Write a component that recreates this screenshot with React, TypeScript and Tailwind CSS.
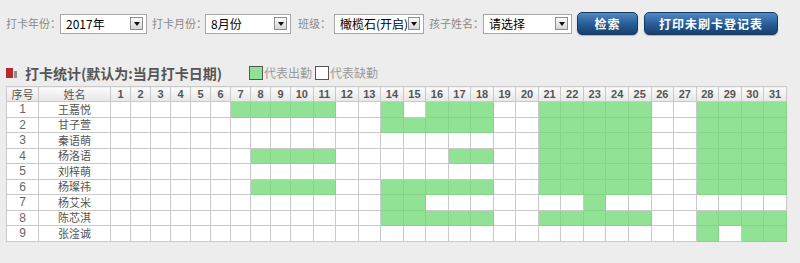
import React from 'react';

// 生成连续日期
function range(a: number, b: number) {
  const out: number[] = [];
  for (let i = a; i <= b; i++) out.push(i);
  return out;
}

const days = range(1, 31);

const students = [
  { name: '王嘉悦', on: [...range(7, 11), 14, 16, 17, 18, ...range(21, 25), ...range(28, 31)] },
  { name: '甘子萱', on: [...range(14, 18), ...range(21, 25), ...range(28, 31)] },
  { name: '秦语萌', on: [...range(21, 25), ...range(28, 31)] },
  { name: '杨洛语', on: [...range(8, 11), 17, 18, ...range(21, 25), ...range(28, 31)] },
  { name: '刘梓萌', on: [...range(21, 25), ...range(28, 31)] },
  { name: '杨璨祎', on: [...range(8, 11), ...range(14, 18), ...range(21, 25), ...range(28, 31)] },
  { name: '杨艾米', on: [14, 15, 23] },
  { name: '陈芯淇', on: [...range(14, 18), ...range(21, 25), ...range(28, 31)] },
  { name: '张淦诚', on: [28, 30, 31] },
];

const cjk = "font-['Noto_Sans_CJK_SC','Liberation_Sans',sans-serif]";

function FakeSelect({ value, className }: { value: string; className: string }) {
  return (
    <div className={`flex items-center justify-between h-[20px] bg-white border border-[#a7a7a7] pl-[5px] pr-[3px] ${className}`}>
      <span className="text-[12px] leading-none text-black whitespace-nowrap">{value}</span>
      {/* 下拉箭头 */}
      <span className="flex items-center justify-center w-[13px] h-[13px] border border-[#8d8d8d] bg-linear-to-b from-[#fdfdfd] to-[#d6d6d6]">
        <svg width="6" height="4" viewBox="0 0 6 4">
          <path d="M0 0H6L3 4Z" fill="#111" />
        </svg>
      </span>
    </div>
  );
}

function BlueButton({ children, className }: { children: React.ReactNode; className: string }) {
  return (
    <button className={`h-[23px] rounded-[5px] border border-[#173a63] bg-linear-to-b from-[#5289c4] via-[#2a5f99] to-[#183f6d] text-white text-[12px] font-bold leading-none tracking-[1px] shadow-[0_1px_1px_rgba(0,0,0,0.25)] ${className}`}>
      {children}
    </button>
  );
}

export default function App() {
  return (
    <div className={`w-[800px] h-[263px] bg-[#ededed] overflow-hidden ${cjk}`}>
      {/* 查询条件 */}
      <div className="flex items-center h-[23px] mt-[12px] pl-[6px] text-[11px] text-[#8a8a8a]">
        <span className="w-[53px] whitespace-nowrap">打卡年份：</span>
        <FakeSelect value="2017年" className="w-[87px] ml-[1px]" />
        <span className="w-[53px] ml-[5px] whitespace-nowrap">打卡月份：</span>
        <FakeSelect value="8月份" className="w-[86px]" />
        <span className="w-[33px] ml-[7px] whitespace-nowrap">班级：</span>
        <FakeSelect value="橄榄石(开启)" className="w-[90px] ml-[3px]" />
        <span className="w-[53px] ml-[5px] whitespace-nowrap">孩子姓名：</span>
        <FakeSelect value="请选择" className="w-[89px] ml-[1px]" />
        <BlueButton className="w-[61px] ml-[5px]">检索</BlueButton>
        <BlueButton className="w-[134px] ml-[6px]">打印未刷卡登记表</BlueButton>
      </div>

      {/* 标题和图例 */}
      <div className="flex items-center h-[20px] mt-[28px] pl-[6px]">
        <span className="flex items-end h-[10px]">
          <span className="w-[7px] h-[10px] bg-[#b52a2a]" />
          <span className="w-[3px] h-[7px] ml-[1px] bg-[#8f8f8f]" />
        </span>
        <span className="w-[224px] ml-[8px] text-[14px] font-bold text-[#555] whitespace-nowrap leading-none">
          打卡统计(默认为:当月打卡日期)
        </span>
        <span className="flex items-center text-[12px] text-[#9a9a9a] leading-none">
          <span className="w-[14px] h-[14px] border border-[#555] bg-[#92e295]" />
          <span className="ml-[1px]">代表出勤</span>
          <span className="w-[14px] h-[14px] ml-[3px] border border-[#555] bg-white" />
          <span className="ml-[1px]">代表缺勤</span>
        </span>
      </div>

      {/* 打卡表 */}
      <table className="mt-[3px] ml-[6px] w-[781px] table-fixed border-collapse">
        <colgroup>
          <col className="w-[32px]" />
          <col className="w-[72px]" />
          {range(1, 9).map((d) => (
            <col key={d} className="w-[20px]" />
          ))}
          {range(10, 31).map((d) => (
            <col key={d} />
          ))}
        </colgroup>
        <thead>
          <tr>
            <th className="h-[15px] p-0 border border-[#c9c9c9] bg-linear-to-b from-[#fbfbfb] to-[#e7e7e7] text-[11px] font-normal text-[#555] leading-none">序号</th>
            <th className="h-[15px] p-0 border border-[#c9c9c9] bg-linear-to-b from-[#fbfbfb] to-[#e7e7e7] text-[11px] font-normal text-[#555] leading-none">姓名</th>
            {days.map((d) => (
              <th
                key={d}
                className="h-[15px] p-0 border border-[#c9c9c9] bg-linear-to-b from-[#fbfbfb] to-[#e7e7e7] font-['Liberation_Sans',sans-serif] text-[11px] font-bold text-[#555] leading-none"
              >
                {d}
              </th>
            ))}
          </tr>
        </thead>
        <tbody>
          {students.map((s, i) => (
            <tr key={s.name}>
              <td className="h-[15.5px] p-0 border border-[#c9c9c9] bg-white text-center font-['Liberation_Sans',sans-serif] text-[12px] text-[#666] leading-none">
                {i + 1}
              </td>
              <td className="h-[15.5px] p-0 border border-[#c9c9c9] bg-white text-center text-[11px] text-[#555] leading-none">
                {s.name}
              </td>
              {days.map((d) =>
                s.on.includes(d) ? (
                  <td key={d} className="h-[15.5px] p-0 border border-[#86d48a] bg-[#92e295]" />
                ) : (
                  <td key={d} className="h-[15.5px] p-0 border border-[#c9c9c9] bg-white" />
                )
              )}
            </tr>
          ))}
        </tbody>
      </table>
    </div>
  );
}
